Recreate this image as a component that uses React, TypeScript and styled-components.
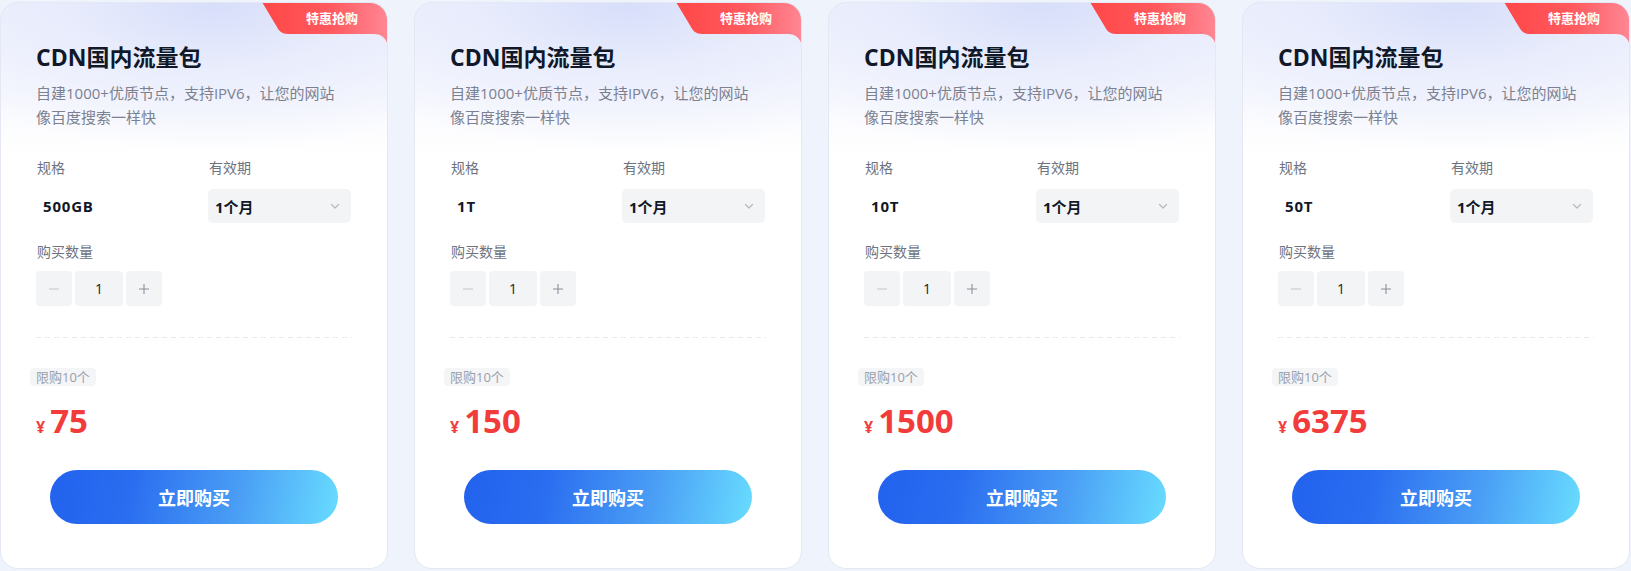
import React from "react";
import styled, { createGlobalStyle } from "styled-components";

const Global = createGlobalStyle`
  html, body { margin: 0; padding: 0; background: #eef3fc; }
  body { font-family: "Open Sans", "Noto Sans CJK SC", sans-serif; }
  * { box-sizing: border-box; }
`;

const Page = styled.div`
  display: flex;
  gap: 26px;
  padding-top: 2px;
  width: 1631px;
`;

const Card = styled.div`
  position: relative;
  width: 388px;
  height: 567px;
  flex: none;
  border-radius: 18px;
  border: 1px solid #e3e8f2;
  overflow: hidden;
  background:
    radial-gradient(ellipse 320px 150px at 55% 0%, rgba(214, 221, 250, 0.95) 0%, rgba(226, 231, 251, 0.6) 45%, rgba(255, 255, 255, 0) 100%),
    linear-gradient(180deg, #eef1fd 0px, #f7f8fe 90px, #ffffff 150px);
  padding: 38px 35px 44px 35px;
  display: flex;
  flex-direction: column;
`;

const Ribbon = styled.div`
  position: absolute;
  top: -1px;
  right: -1px;
  width: 126px;
  height: 46px;
`;

const RibbonText = styled.span`
  position: absolute;
  top: 6px;
  right: 30px;
  color: #fff;
  font-size: 13px;
  font-weight: 700;
  line-height: 20px;
`;

const Title = styled.h2`
  margin: 0;
  font-size: 23px;
  line-height: 32px;
  font-weight: 700;
  color: #111827;
`;

const Desc = styled.p`
  margin: 8px 0 0;
  font-size: 15px;
  line-height: 24px;
  color: #7b8190;
  width: 310px;
`;

const Grid = styled.div`
  margin-top: 29px;
  display: grid;
  grid-template-columns: 143px 143px;
  column-gap: 29px;
`;

const Field = styled.div`
  display: flex;
  flex-direction: column;
  gap: 11px;
`;

const Label = styled.div`
  font-size: 14px;
  line-height: 20px;
  color: #6e7380;
  padding-left: 1px;
`;

const ValueBox = styled.div<{ $select?: boolean }>`
  height: 34px;
  display: flex;
  align-items: center;
  justify-content: space-between;
  padding: 0 10px 0 7px;
  border-radius: 5px;
  background: ${(p) => (p.$select ? "#f3f4f5" : "transparent")};
  font-size: 15px;
  font-weight: 700;
  color: #111827;
  letter-spacing: ${(p) => (p.$select ? "0" : "0.8px")};
`;

const QtyLabel = styled(Label)`
  margin-top: 19px;
`;

const Stepper = styled.div`
  margin-top: 9px;
  display: flex;
  gap: 3px;
`;

const StepBtn = styled.div<{ $wide?: boolean }>`
  width: ${(p) => (p.$wide ? "48px" : "36px")};
  height: 35px;
  border-radius: 4px;
  background: #f3f4f5;
  display: flex;
  align-items: center;
  justify-content: center;
  font-size: 14px;
  color: #1d2129;
`;

const Divider = styled.div`
  margin-top: 31px;
  height: 1px;
  width: 316px;
  background-image: linear-gradient(90deg, #e7eaee 0 5px, transparent 5px 9px);
  background-size: 9px 1px;
  background-repeat: repeat-x;
`;

const Limit = styled.div`
  margin-top: 30px;
  margin-left: -6px;
  align-self: flex-start;
  height: 18px;
  padding: 0 6px;
  border-radius: 4px;
  background: #f4f5f7;
  font-size: 13px;
  line-height: 18px;
  color: #9aa0aa;
`;

const Price = styled.div`
  margin-top: 15px;
  display: flex;
  align-items: baseline;
  color: #f23c3c;
  font-weight: 700;
  height: 40px;
  line-height: 40px;
`;

const Yen = styled.span`
  font-size: 16px;
  margin-right: 5px;
`;

const Amount = styled.span`
  font-size: 33px;
`;

const BuyButton = styled.button`
  margin: auto 0 0 14px;
  width: 288px;
  height: 54px;
  border: none;
  border-radius: 27px;
  background: linear-gradient(100deg, #2262ee 0%, #2a6df0 28%, #4a9ef5 65%, #68dcff 100%);
  color: #fff;
  font-family: "Open Sans", "Noto Sans CJK SC", sans-serif;
  font-size: 18px;
  font-weight: 700;
  cursor: pointer;
`;

const Chevron = () => (
  <svg width="12" height="12" viewBox="0 0 12 12" fill="none">
    <path d="M2.5 4.5 L6 8 L9.5 4.5" stroke="#b4b9c2" strokeWidth="1.2" strokeLinecap="round" strokeLinejoin="round" />
  </svg>
);

const RibbonShape = ({ id }: { id: string }) => (
  <svg width="126" height="46" viewBox="0 0 126 46">
    <defs>
      <linearGradient id={id} x1="0" y1="0" x2="1" y2="0">
        <stop offset="0%" stopColor="#ff4747" />
        <stop offset="55%" stopColor="#ff5a5f" />
        <stop offset="100%" stopColor="#ff8794" />
      </linearGradient>
    </defs>
    <path
      d="M0 0 L126 0 L126 46 C126 38 120 32 112 32 L26 32 C20 32 17 29 15 25 Z"
      fill={`url(#${id})`}
    />
  </svg>
);

const Minus = () => (
  <svg width="12" height="12" viewBox="0 0 12 12">
    <path d="M1 6 H11" stroke="#c9cdd4" strokeWidth="1.2" />
  </svg>
);

const Plus = () => (
  <svg width="12" height="12" viewBox="0 0 12 12">
    <path d="M1 6 H11 M6 1 V11" stroke="#8a909a" strokeWidth="1.1" />
  </svg>
);

const items = [
  { spec: "500GB", price: "75" },
  { spec: "1T", price: "150" },
  { spec: "10T", price: "1500" },
  { spec: "50T", price: "6375" },
];

export default function App() {
  return (
    <>
      <Global />
      <Page>
        {items.map((it, i) => (
          <Card key={i}>
            <Ribbon>
              <RibbonShape id={`rg${i}`} />
              <RibbonText>特惠抢购</RibbonText>
            </Ribbon>
            <Title>CDN国内流量包</Title>
            <Desc>自建1000+优质节点，支持IPV6，让您的网站像百度搜索一样快</Desc>
            <Grid>
              <Field>
                <Label>规格</Label>
                <ValueBox>{it.spec}</ValueBox>
              </Field>
              <Field>
                <Label>有效期</Label>
                <ValueBox $select>
                  1个月
                  <Chevron />
                </ValueBox>
              </Field>
            </Grid>
            <QtyLabel>购买数量</QtyLabel>
            <Stepper>
              <StepBtn>
                <Minus />
              </StepBtn>
              <StepBtn $wide>1</StepBtn>
              <StepBtn>
                <Plus />
              </StepBtn>
            </Stepper>
            <Divider />
            <Limit>限购10个</Limit>
            <Price>
              <Yen>¥</Yen>
              <Amount>{it.price}</Amount>
            </Price>
            <BuyButton>立即购买</BuyButton>
          </Card>
        ))}
      </Page>
    </>
  );
}
